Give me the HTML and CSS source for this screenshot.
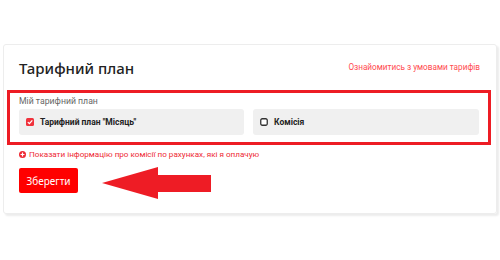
FILE: index.html
```html
<!DOCTYPE html>
<html lang="uk">
<head>
    <meta charset="UTF-8">
    <meta name="viewport" content="width=device-width, initial-scale=1.0">
    <title>Тарифний план</title>
    <link rel="stylesheet" href="styles.css">
</head>
<body>
    <div class="card">
        <div class="head">
            <h2 class="title">Тарифний план</h2>
            <a class="terms" href="#">Ознайомитись з умовами тарифів</a>
        </div>
        <div class="group">
            <div class="group-label">Мій тарифний план</div>
            <div class="options">
                <label class="option">
                    <svg class="check on" viewBox="0 0 8 8" width="8" height="8">
                        <rect x="0" y="0" width="8" height="8" rx="1.5" fill="#f0323c"/>
                        <path d="M1.8 4.1 L3.4 5.6 L6.3 2.4" fill="none" stroke="#fff" stroke-width="1.3"/>
                    </svg>
                    <span>Тарифний план "Місяць"</span>
                </label>
                <label class="option">
                    <svg class="check" viewBox="0 0 8 8" width="8" height="8">
                        <rect x="0.75" y="0.75" width="6.5" height="6.5" rx="1.5" fill="#fff" stroke="#333" stroke-width="1.3"/>
                    </svg>
                    <span>Комісія</span>
                </label>
            </div>
        </div>
        <a class="info" href="#">
            <svg viewBox="0 0 8 8" width="7" height="7">
                <circle cx="4" cy="4" r="4" fill="#ee2a34"/>
                <path d="M4 1.8 V6.2 M1.8 4 H6.2" stroke="#fff" stroke-width="1.4"/>
            </svg>
            Показати інформацію про комісії по рахунках, які я оплачую
        </a>
        <button class="save" type="button">Зберегти</button>
    </div>
    <svg class="arrow" viewBox="0 0 110 34" width="110" height="34">
        <polygon points="0,16 56,0 56,8 109,8 109,25 56,25 56,32" fill="#ee1c25"/>
    </svg>
</body>
</html>
```

FILE: styles.css
```css
* {
    padding: 0;
    margin: 0;
    box-sizing: border-box;
}
body {
    background: #fff;
    font-family: "Noto Sans", "Open Sans", sans-serif;
    color: #222;
    position: relative;
    height: 260px;
}
.card {
    margin: 44px 3px 0 3px;
    height: 170px;
    padding: 11px 15px 0 15px;
    border: 1px solid #ededed;
    box-shadow: 2px 2px 2px #ececec;
    border-radius: 3px;
}
.head {
    display: flex;
    justify-content: space-between;
    align-items: center;
    height: 24px;
}
.title {
    font-size: 15px;
    font-weight: 500;
    color: #222;
}
.terms {
    font-family: Roboto, "Noto Sans", sans-serif;
    font-size: 8.2px;
    color: #ff4a4f;
    text-decoration: none;
    margin-top: -3px;
    margin-right: 1px;
}
.group {
    margin: 10px -10px 0 -12px;
    border: 3px solid #ed1c24;
    padding: 2px 9px 7px 9px;
}
.group-label {
    font-family: Roboto, "Noto Sans", sans-serif;
    font-size: 8.7px;
    color: #666;
    line-height: 12px;
}
.options {
    display: grid;
    grid-template-columns: 225px 226px;
    gap: 9px;
    margin-top: 2px;
}
.option {
    display: flex;
    align-items: center;
    gap: 6px;
    height: 26px;
    padding-left: 7px;
    background: #f0f0f0;
    border-radius: 3px;
    font-family: Roboto, "Noto Sans", sans-serif;
    font-size: 8.5px;
    font-weight: 700;
    color: #222;
}
.info {
    display: flex;
    align-items: center;
    gap: 3px;
    margin-top: 3px;
    font-family: Roboto, "Noto Sans", sans-serif;
    font-size: 8.1px;
    color: #ee2a34;
    text-decoration: none;
    line-height: 12px;
}
.save {
    margin-top: 8px;
    width: 59px;
    height: 25px;
    border: none;
    border-radius: 2px;
    background: #ff0000;
    color: #fff;
    font-family: "Noto Sans", "Open Sans", sans-serif;
    font-size: 10px;
}
.arrow {
    position: absolute;
    left: 102px;
    top: 167px;
}
```
